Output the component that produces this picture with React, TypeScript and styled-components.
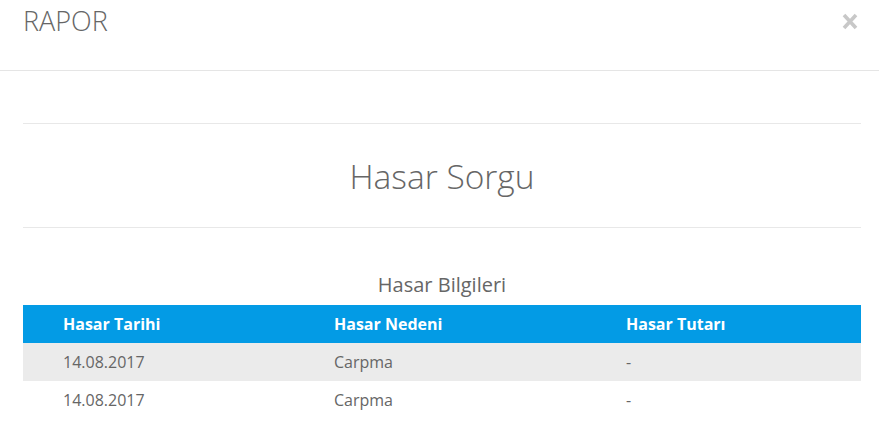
import React from "react";
import styled, { createGlobalStyle } from "styled-components";

const Global = createGlobalStyle`
  html, body { margin: 0; padding: 0; background: #fff; }
  body { font-family: "Open Sans", "Noto Sans", sans-serif; color: #666; }
`;

const Modal = styled.div`
  width: 879px;
  background: #fff;
`;

const Header = styled.div`
  height: 71px;
  border-bottom: 1px solid #e5e5e5;
  display: flex;
  justify-content: space-between;
  align-items: flex-start;
  padding: 0 21px 0 23px;
  box-sizing: border-box;
`;

const HeaderTitle = styled.h4`
  margin: 0;
  padding-top: 4px;
  font-weight: 300;
  font-size: 27px;
  line-height: 34px;
  color: #666;
`;

const Close = styled.button`
  border: 0;
  background: none;
  padding: 0;
  margin-top: 13px;
  width: 16px;
  height: 17px;
  display: flex;
  cursor: pointer;
`;

const Body = styled.div`
  padding: 52px 18px 16px 23px;
`;

const Rule = styled.hr`
  border: 0;
  border-top: 1px solid #e8e8e8;
  margin: 0;
`;

const Title = styled.h2`
  margin: 0;
  height: 103px;
  display: flex;
  align-items: center;
  justify-content: center;
  font-weight: 300;
  font-size: 33.5px;
  color: #666;
`;

const Caption = styled.div`
  height: 77px;
  display: flex;
  align-items: flex-end;
  justify-content: center;
  padding-bottom: 7px;
  box-sizing: border-box;
  font-size: 20px;
  font-weight: 400;
  color: #666;
`;

const Table = styled.div`
  display: grid;
  grid-template-columns: 271px 292px 1fr;
`;

const Row = styled.div<{ $head?: boolean; $alt?: boolean }>`
  display: contents;
  & > div {
    background: ${(p) => (p.$head ? "#039be5" : p.$alt ? "#ebebeb" : "#fff")};
    color: ${(p) => (p.$head ? "#fff" : "#666")};
    font-weight: ${(p) => (p.$head ? 700 : 400)};
  }
`;

const Cell = styled.div`
  height: 38px;
  display: flex;
  align-items: center;
  padding-left: 40px;
  font-size: 16px;
`;

const rows = [
  ["14.08.2017", "Carpma", "-"],
  ["14.08.2017", "Carpma", "-"],
];

export default function App() {
  return (
    <>
      <Global />
      <Modal>
        <Header>
          <HeaderTitle>RAPOR</HeaderTitle>
          <Close aria-label="Kapat">
            <svg width="16" height="17" viewBox="0 0 16 17">
              <path d="M2 2 L14 15 M14 2 L2 15" stroke="#c8c8c8" strokeWidth="3.6" strokeLinecap="butt" />
            </svg>
          </Close>
        </Header>
        <Body>
          <Rule />
          <Title>Hasar Sorgu</Title>
          <Rule />
          <Caption>Hasar Bilgileri</Caption>
          <Table>
            <Row $head>
              <Cell>Hasar Tarihi</Cell>
              <Cell>Hasar Nedeni</Cell>
              <Cell>Hasar Tutarı</Cell>
            </Row>
            {rows.map((r, i) => (
              <Row key={i} $alt={i % 2 === 0}>
                {r.map((c, j) => (
                  <Cell key={j}>{c}</Cell>
                ))}
              </Row>
            ))}
          </Table>
        </Body>
      </Modal>
    </>
  );
}
